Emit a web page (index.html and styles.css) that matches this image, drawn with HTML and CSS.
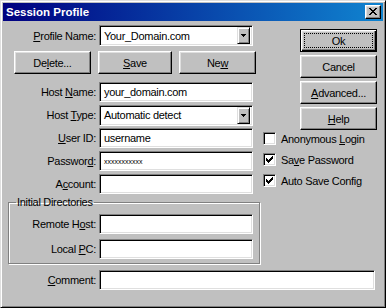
FILE: index.html
```html
<!DOCTYPE html>
<html>
<head>
<meta charset="utf-8">
<link rel="stylesheet" href="styles.css">
</head>
<body>
<div class="window">
  <div class="titlebar">
    <span class="title">Session Profile</span>
    <span class="close">
      <svg width="8" height="7" viewBox="0 0 8 7" shape-rendering="crispEdges"><path fill="#000" d="M0 0h2v1H0zM6 0h2v1H6zM1 1h2v1H1zM5 1h2v1H5zM2 2h4v1H2zM3 3h2v1H3zM2 4h4v1H2zM1 5h2v1H1zM5 5h2v1H5zM0 6h2v1H0zM6 6h2v1H6z"/></svg>
    </span>
  </div>
  <div class="content">
    <div class="main">
      <div class="left">
        <div class="row r-profile">
          <span class="lbl"><u>P</u>rofile Name:</span>
          <div class="field combo"><span class="val">Your_Domain.com</span><span class="drop"><svg width="5" height="3" viewBox="0 0 5 3" shape-rendering="crispEdges"><path fill="#000" d="M0 0h5v1H0zM1 1h3v1H1zM2 2h1v1H2z"/></svg></span></div>
        </div>
        <div class="btnrow">
          <span class="btn b-del">De<u>l</u>ete...</span>
          <span class="btn b-save"><u>S</u>ave</span>
          <span class="btn b-new">Ne<u>w</u></span>
        </div>
        <div class="fields">
          <div class="row"><span class="lbl">Host <u>N</u>ame:</span><div class="field input"><span class="val">your_domain.com</span></div></div>
          <div class="row"><span class="lbl">Host <u>T</u>ype:</span><div class="field combo"><span class="val">Automatic detect</span><span class="drop"><svg width="5" height="3" viewBox="0 0 5 3" shape-rendering="crispEdges"><path fill="#000" d="M0 0h5v1H0zM1 1h3v1H1zM2 2h1v1H2z"/></svg></span></div></div>
          <div class="row"><span class="lbl"><u>U</u>ser ID:</span><div class="field input"><span class="val">username</span></div></div>
          <div class="row"><span class="lbl">Passwor<u>d</u>:</span><div class="field input"><span class="val pw">xxxxxxxxxxx</span></div></div>
          <div class="row"><span class="lbl">A<u>c</u>count:</span><div class="field input"></div></div>
        </div>
        <fieldset class="group">
          <legend>Initial Directories</legend>
          <div class="row"><span class="lbl g">Remote H<u>o</u>st:</span><div class="field input"></div></div>
          <div class="row"><span class="lbl g">Local <u>P</u>C:</span><div class="field input"></div></div>
        </fieldset>
      </div>
      <div class="right">
        <div class="btncol">
          <span class="btn default"><span class="focus">Ok</span></span>
          <span class="btn">Cancel</span>
          <span class="btn"><u>A</u>dvanced...</span>
          <span class="btn"><u>H</u>elp</span>
        </div>
        <div class="checks">
          <div class="chk"><span class="cb"></span><span>Anonymous <u>L</u>ogin</span></div>
          <div class="chk"><span class="cb"><svg width="7" height="7" viewBox="0 0 7 7" shape-rendering="crispEdges"><path fill="#000" d="M6 0h1v1H6zM5 1h2v1H5zM0 2h1v1H0zM4 2h3v1H4zM0 3h2v1H0zM3 3h3v1H3zM0 4h5v1H0zM1 5h3v1H1zM2 6h1v1H2z"/></svg></span><span>Sa<u>v</u>e Password</span></div>
          <div class="chk"><span class="cb"><svg width="7" height="7" viewBox="0 0 7 7" shape-rendering="crispEdges"><path fill="#000" d="M6 0h1v1H6zM5 1h2v1H5zM0 2h1v1H0zM4 2h3v1H4zM0 3h2v1H0zM3 3h3v1H3zM0 4h5v1H0zM1 5h3v1H1zM2 6h1v1H2z"/></svg></span><span>Auto Save Config</span></div>
        </div>
      </div>
    </div>
    <div class="row r-comment"><span class="lbl"><u>C</u>omment:</span><div class="field input wide"></div></div>
  </div>
</div>
</body>
</html>
```
FILE: styles.css
```css
* { box-sizing: border-box; }
html, body { margin: 0; padding: 0; }
body {
  width: 386px; height: 308px; overflow: hidden;
  background: #c0c0c0;
  font-family: "Liberation Sans", Arial, sans-serif;
  font-size: 11px; color: #000;
  letter-spacing: -0.3px;
}
u { text-decoration: underline; text-underline-offset: 1px; }
.window {
  width: 386px; height: 308px;
  background: #c0c0c0;
  border: 1px solid; border-color: #dfdfdf #000 #000 #dfdfdf;
  box-shadow: inset 1px 1px #fff, inset -1px -1px #808080;
  padding: 2px;
  display: flex; flex-direction: column;
}
.titlebar {
  height: 18px; flex: none;
  background: linear-gradient(to right, #000080, #1084d0);
  display: flex; align-items: center; justify-content: space-between;
  padding: 0 2px 0 3px;
}
.title { color: #fff; font-weight: bold; font-size: 11.5px; letter-spacing: 0; }
.close {
  width: 16px; height: 14px;
  background: #c0c0c0;
  border: 1px solid; border-color: #fff #000 #000 #fff;
  box-shadow: inset -1px -1px #808080, inset 1px 1px #dfdfdf;
  display: flex; align-items: center; justify-content: center;
  padding-bottom: 1px;
}
.close svg { display: block; }
.content { flex: 1; display: flex; flex-direction: column; padding-left: 5px; }
.main { display: flex; }
.left { width: 252px; flex: none; }
.right { margin-left: 3px; padding-top: 8px; }
.row { display: flex; align-items: center; height: 20px; }
.lbl { width: 88px; margin-right: 3px; text-align: right; white-space: nowrap; flex: none; }
.lbl.g { width: 87px; }
.field {
  background: #fff;
  border: 1px solid; border-color: #808080 #fff #fff #808080;
  box-shadow: inset 1px 1px #000, inset -1px -1px #dfdfdf;
  height: 20px; width: 154px; flex: none;
  display: flex; align-items: center;
  padding: 0 2px 0 4px;
  white-space: nowrap;
}
.field.wide { width: 276px; }
.combo { height: 21px; }
.val { flex: 1; }
.pw { font-size: 7px; letter-spacing: 0; }
.drop {
  width: 13px; height: 17px; flex: none;
  background: #c0c0c0;
  border: 1px solid; border-color: #dfdfdf #000 #000 #dfdfdf;
  box-shadow: inset 1px 1px #fff, inset -1px -1px #808080;
  display: flex; align-items: center; justify-content: center;
}
.drop svg { display: block; }
.r-profile { margin-top: 4px; height: 21px; }
.btn {
  height: 23px;
  background: #c0c0c0;
  border: 1px solid; border-color: #fff #000 #000 #fff;
  box-shadow: inset -1px -1px #808080, inset 1px 1px #dfdfdf;
  display: flex; align-items: center; justify-content: center;
  white-space: nowrap;
}
.btnrow { display: flex; gap: 7px; margin-top: 5px; padding-left: 6px; }
.b-del { width: 77px; }
.b-save { width: 74px; }
.b-new { width: 77px; }
.fields { display: flex; flex-direction: column; gap: 3px; margin-top: 8px; }
.group {
  margin: 2px 0 0 0; padding: 0 0 4px 0;
  width: 252px;
  border: 1px solid #808080;
  box-shadow: inset 1px 1px #fff, 1px 1px #fff;
  display: flex; flex-direction: column; gap: 5px;
}
.group legend { padding: 0 1px; margin-left: 7px; line-height: 13px; }
.group .row:first-of-type { margin-top: 5px; }
.btncol { display: flex; flex-direction: column; gap: 3px; margin-left: 37px; width: 77px; }
.btncol .btn { width: 77px; }
.btn.default {
  border: 1px solid #000;
  box-shadow: inset 1px 1px #fff, inset -1px -1px #000, inset -2px -2px #808080, inset 2px 2px #dfdfdf;
  padding: 3px;
}
.focus {
  width: 100%; height: 100%;
  border: 1px dotted #000;
  display: flex; align-items: center; justify-content: center;
}
.checks { display: flex; flex-direction: column; gap: 8px; margin-top: 2px; }
.chk { display: flex; align-items: center; height: 13px; gap: 5px; white-space: nowrap; }
.cb {
  width: 13px; height: 13px; flex: none;
  background: #fff;
  border: 1px solid; border-color: #808080 #fff #fff #808080;
  box-shadow: inset 1px 1px #000, inset -1px -1px #dfdfdf;
  padding: 2px 0 0 2px;
}
.cb svg { display: block; }
.r-comment { margin-top: 6px; }
```
